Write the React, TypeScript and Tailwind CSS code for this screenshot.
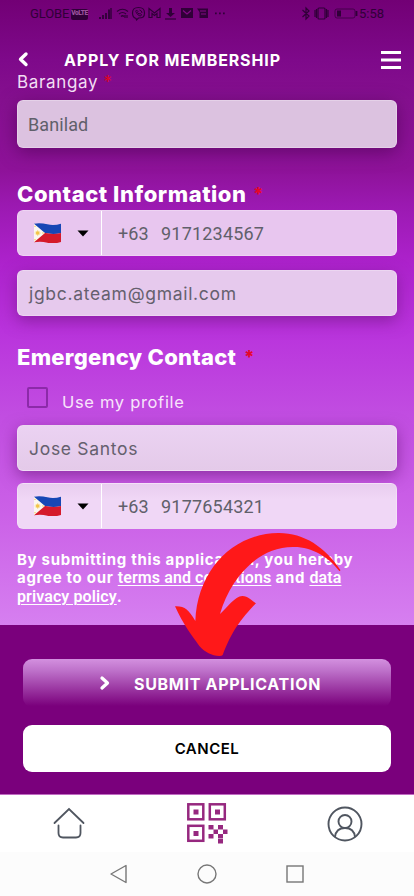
import React from "react";

const work = "font-['Inter','Liberation_Sans',sans-serif]";
const roboto = "font-['Roboto','Liberation_Sans',sans-serif]";
const link = "font-['Roboto','Liberation_Sans',sans-serif] text-[16px] tracking-[0.1px] font-semibold underline decoration-1 underline-offset-2";

function Flag() {
  return (
    <svg className="ml-4 h-5 w-[27px]" viewBox="0 0 81 60">
      <path d="M0 2Q20-1 40 4T81 2V30Q60 36 40 31T0 30Z" fill="#1747b5" />
      <path d="M0 30Q20 27 40 31T81 30V57Q60 64 40 59T0 58Z" fill="#d51a2b" />
      <path d="M0 2L33 30L0 58Z" fill="#fbf7ef" />
      <circle cx="11" cy="30" r="5.5" fill="#f3c54b" />
      <path d="M11 21v18M2 30h18M5 24l12 12M17 24L5 36" stroke="#f3c54b" strokeWidth="1.5" />
      <circle cx="3" cy="10" r="2" fill="#f3c54b" />
      <circle cx="3" cy="50" r="2" fill="#f3c54b" />
      <circle cx="27" cy="30" r="2" fill="#f3c54b" />
    </svg>
  );
}

function Phone({ value, tone }: { value: string; tone: string }) {
  return (
    <div className={`flex h-[46px] items-center rounded-[6px] border border-white/25 ${tone}`}>
      <div className="flex h-[44px] w-[84px] items-center border-r-[1.5px] border-white">
        <Flag />
        <svg className="ml-4 h-[7px] w-3" viewBox="0 0 12 7"><path d="M.5.5h11L6 6.5Z" fill="#000" /></svg>
      </div>
      <div className={`flex pl-4 pt-px text-[18px] leading-none text-[#60606a] ${roboto}`}>
        <span className="w-[43px] tracking-[0.1px]">+63</span>
        <span className="tracking-[0.2px]">{value}</span>
      </div>
    </div>
  );
}

function StatusBar() {
  return (
    <div className={`flex h-[28px] items-center text-[13px] text-[#300038] ${roboto}`}>
      <span className="ml-[30px] w-[41px] tracking-[-0.1px]">GLOBE</span>
      <span className="flex h-[11px] w-[17px] items-center justify-center rounded-[2px] bg-[#300038] text-[6.5px] font-black tracking-[-0.4px] text-[#9d539f]">VoLTE</span>
      <svg className="ml-2.5 h-4 w-[127px]" viewBox="98 6 127 16" fill="none" stroke="#300038" strokeWidth="1.2">
        <path d="M100 19v-2M103 19v-4M106 19v-6M109 19V9.500" strokeWidth="1.8" />
        <path d="M111 19V8" strokeWidth="1.400" />
        <path d="M117 11.500Q122.500 7 128 11.500M119 14Q122.500 11 126 14M121 16.500Q122.500 15 124 16.500M125 15v3M127 15v3" />
        <path d="M136 18.500C133 17.500 132.500 16 132.500 13C132.500 9 134 7.500 138.500 7.500S144.500 9 144.500 13S143 18 138.500 18L136.500 20Z" />
        <path d="M136.500 10Q135 11 136.500 13Q138 15.500 140 16Q141.500 16 141.500 14.500L140 13.500L139 14L137.500 12.500L138 11.500ZM139.500 10Q142 10.500 142 13" strokeWidth="1" />
        <path d="M149 17.500V8.500L154.500 13L160 8.500V17.500H157V13.500L154.500 15.500L152 13.500V17.500Z" />
        <path d="M165 19h11" />
        <path d="M169 8h3v5h3l-4.500 4-4.500-4h3Z" fill="#300038" stroke="none" />
        <path d="M181 8h12v10h-12Z" fill="#300038" stroke="none" />
        <path d="M183 10.500L187 14L191 10.500" stroke="#830886" />
        <path d="M197 8.500h11v9.500h-8.500v-6Z" fill="#300038" stroke="none" />
        <path d="M200 11h6M201 14h5" stroke="#830886" />
        <path d="M215 13.300h1.700M219 13.300h1.700M223 13.300h1.700" strokeWidth="1.700" />
      </svg>
      <svg className="ml-[75px] h-4 w-[58px]" viewBox="299 6 58 16" fill="none" stroke="#300038" strokeWidth="1.200">
        <path d="M301.500 10L308 16L305 19V8L308 11L301.500 17M314 10v7M327 10v7M315.500 9v9M325.500 9v9" />
        <rect x="317" y="8" width="7" height="11" rx="1" />
        <rect x="334" y="9" width="20" height="9" rx="2" strokeWidth=".7" />
        <path d="M336 10.500h4v6h-4Z" fill="#300038" stroke="none" />
        <path d="M355.500 11v5" strokeWidth="1.800" />
      </svg>
      <span className="ml-px">5:58</span>
    </div>
  );
}

export default function App() {
  return (
    <main className={`relative h-[896px] w-[414px] overflow-hidden bg-white ${work}`}>
      <section className="h-[625px] bg-[linear-gradient(180deg,#720075_0px,#7e098a_60px,#85108f_100px,#8e1299_170px,#9b19b1_205px,#ad22cc_263px,#b933dc_330px,#c14de1_415px,#cb61e7_515px,#d67ff0_625px)]">
        <StatusBar />
        <header className="flex h-[44px] items-center pt-[20px] text-white">
          <svg className="ml-[17px] mt-[-2px] h-4 w-3" viewBox="0 0 12 16" fill="none" stroke="white" strokeWidth="3.400" strokeLinecap="round" strokeLinejoin="round"><path d="M9 3L3.500 8.300L9 13.500" /></svg>
          <h1 className="ml-[35px] w-[217px] whitespace-nowrap text-[16px] font-bold leading-[20px] tracking-[0.87px]">APPLY FOR MEMBERSHIP</h1>
          <svg className="ml-[100px] h-[18px] w-5" viewBox="0 0 20 18"><path d="M0 1.500h20M0 9h20M0 16.500h20" stroke="white" strokeWidth="3" /></svg>
        </header>
        <div className="px-[17px]">
          <label className="block h-[28px] text-[17px] leading-[20px] tracking-[0.65px] text-[#f2def4]">Barangay <span className="text-[#df0622]">*</span></label>
          <div className={`flex h-[48px] items-center rounded-[6px] border border-white/25 bg-[#dcc2e0] pl-[10px] pt-px text-[18px] tracking-[0.1px] text-[#60606a] shadow-[0_4px_18px_#47004d90] ${roboto}`}>Banilad</div>
          <h2 className="flex h-[62px] items-end pb-[2px] text-[22px] font-extrabold leading-[28px] tracking-[0.55px] text-white"><span className="w-[231px] whitespace-nowrap">Contact Information</span><span className="ml-[5px] text-[18px] text-[#e60728]">*</span></h2>
          <Phone value="9171234567" tone="bg-[#e8c6ef]" />
          <div className="mt-[14px] flex h-[46px] items-center rounded-[6px] border border-white/25 bg-[#e6c9ed] pl-[11px] pt-[3px] text-[17.500px] tracking-[0.7px] text-[#65606e] shadow-[0_5px_16px_#61107080]">jgbc.ateam@gmail.com</div>
          <h2 className="flex h-[55px] items-end text-[22px] font-extrabold leading-[28px] tracking-[0.25px] text-white"><span className="w-[223px] whitespace-nowrap">Emergency Contact</span><span className="ml-[4px] text-[18px] text-[#e60728]">*</span></h2>
          <label className="flex h-[54px] items-center pl-[10px] text-[16.500px] leading-[22px] tracking-[0.68px] text-[#f8e4fb]"><span className="mb-px mt-[-1px] h-[21px] w-[21px] rounded-[2px] border-2 border-[#8c2aa9]" /><span className="ml-[14px] pt-[7px]">Use my profile</span></label>
          <div className="flex h-[46px] items-center rounded-[6px] border border-white/25 bg-[linear-gradient(#ebd2f2,#e4cae9)] pl-[11px] pt-[3px] text-[17.500px] tracking-[0.7px] text-[#65606e] shadow-[0_5px_16px_#61107090]">Jose Santos</div>
          <div className="mt-3"><Phone value="9177654321" tone="bg-[linear-gradient(#e8cdef,#f0d7f6_35%)]" /></div>
          <div className="mt-[21px] whitespace-nowrap text-[15px] font-bold leading-[19px] text-white">
            <p className="h-[18px] tracking-[0.7px]">By submitting this application, you hereby</p>
            <p className="h-[19px] tracking-[0.7px]">agree to our <span className={link}>terms and conditions</span> and <span className={link}>data</span></p>
            <p className="h-[19px]"><span className={link}>privacy policy</span>.</p>
          </div>
        </div>
      </section>
      <section className="h-[170px] border-b border-[#c06ac2] bg-[#7a007c] px-[23px] pt-[34px]">
        <button className="flex h-[48px] w-full items-center rounded-[9px] bg-[linear-gradient(#d390df,#bd70c9_25%,#7a007c_98%)] text-[16px] font-bold text-white">
          <svg className="ml-[76px] h-4 w-3" viewBox="0 0 12 16" fill="none" stroke="white" strokeWidth="3.300" strokeLinecap="round" strokeLinejoin="round"><path d="M3 3L8.500 8L3 13" /></svg>
          <span className="ml-[23px] whitespace-nowrap pt-[2px] tracking-[0.7px]">SUBMIT APPLICATION</span>
        </button>
        <button className="mt-[18px] block h-[47px] w-full rounded-[9px] bg-white pt-[2px] text-[15px] font-semibold tracking-[0.5px] text-black">CANCEL</button>
      </section>
      <nav className="flex h-[57px] items-start bg-white">
        <svg className="ml-[53px] mt-[12px] h-8 w-8" viewBox="0 0 32 32" fill="none" stroke="#505660" strokeWidth="1.800" strokeLinecap="round"><path d="M1.500 16L16 2L30.500 16M5.500 18.500V26Q5.500 30.500 10 30.500H23Q27.500 30.500 27.500 26V18.500" /></svg>
        <svg className="ml-[102px] mt-[8px] h-[41px] w-[41px]" viewBox="0 0 41 41">
          <g fill="none" stroke="#96287f" strokeWidth="2.500"><rect x="1.300" y="1.300" width="15" height="15" /><rect x="22.800" y="1.300" width="15" height="15" /><rect x="1.300" y="22.800" width="15" height="15" /></g>
          <path fill="#96287f" d="M6.500 6.500h5v5h-5ZM28 6.500h5v5h-5ZM6.500 28h5v5h-5ZM21.500 22h5v4.500h-5ZM31 22h5v4.500h-5ZM26.500 26.500h4.500v4.500h-4.500ZM36 26.500h4.500v4.500h-4.500ZM21.500 31h5v4.500h-5ZM31 31h5v4.500h-5ZM31 36h5v4.500h-5Z" />
        </svg>
        <svg className="ml-[99px] mt-[11px] h-[36px] w-[36px]" viewBox="0 0 36 36" fill="none" stroke="#505660" strokeWidth="1.900"><circle cx="18" cy="18" r="16.500" /><circle cx="18" cy="15.500" r="6.500" /><path d="M8 31Q9 22 18 22T28 31" /></svg>
      </nav>
      <div className="flex h-[44px] items-start bg-[#fcfcfc]">
        <svg className="ml-[110px] mt-[12px] h-5 w-[17px]" viewBox="0 0 17 20" fill="none" stroke="#777" strokeWidth="1.400"><path d="M16 1.500V18.500L1 10Z" strokeLinejoin="round" /></svg>
        <svg className="ml-[70px] mt-[12px] h-5 w-5" viewBox="0 0 20 20" fill="none" stroke="#777" strokeWidth="1.400"><circle cx="10" cy="10" r="9" /></svg>
        <svg className="ml-[69px] mt-[13px] h-[18px] w-[18px]" viewBox="0 0 18 18" fill="none" stroke="#777" strokeWidth="1.400"><rect x="1" y="1" width="16" height="16" /></svg>
      </div>
      <svg className="absolute left-[160px] top-[520px] h-[150px] w-[254px]" viewBox="0 0 762 450">
        <path fill="#ff1819" d="M538 153C505 110 455 80 400 81C290 80 210 180 180 282C200 265 225 228 247 228C265 228 272 240 288 250C240 300 215 335 188 405Q186 408 178 408C155 407 135 397 118 378C95 345 70 315 45 259C75 258 85 268 106 303C112 150 220 40 355 39C430 38 495 80 541 150Q541 154 538 153Z" />
      </svg>
    </main>
  );
}
